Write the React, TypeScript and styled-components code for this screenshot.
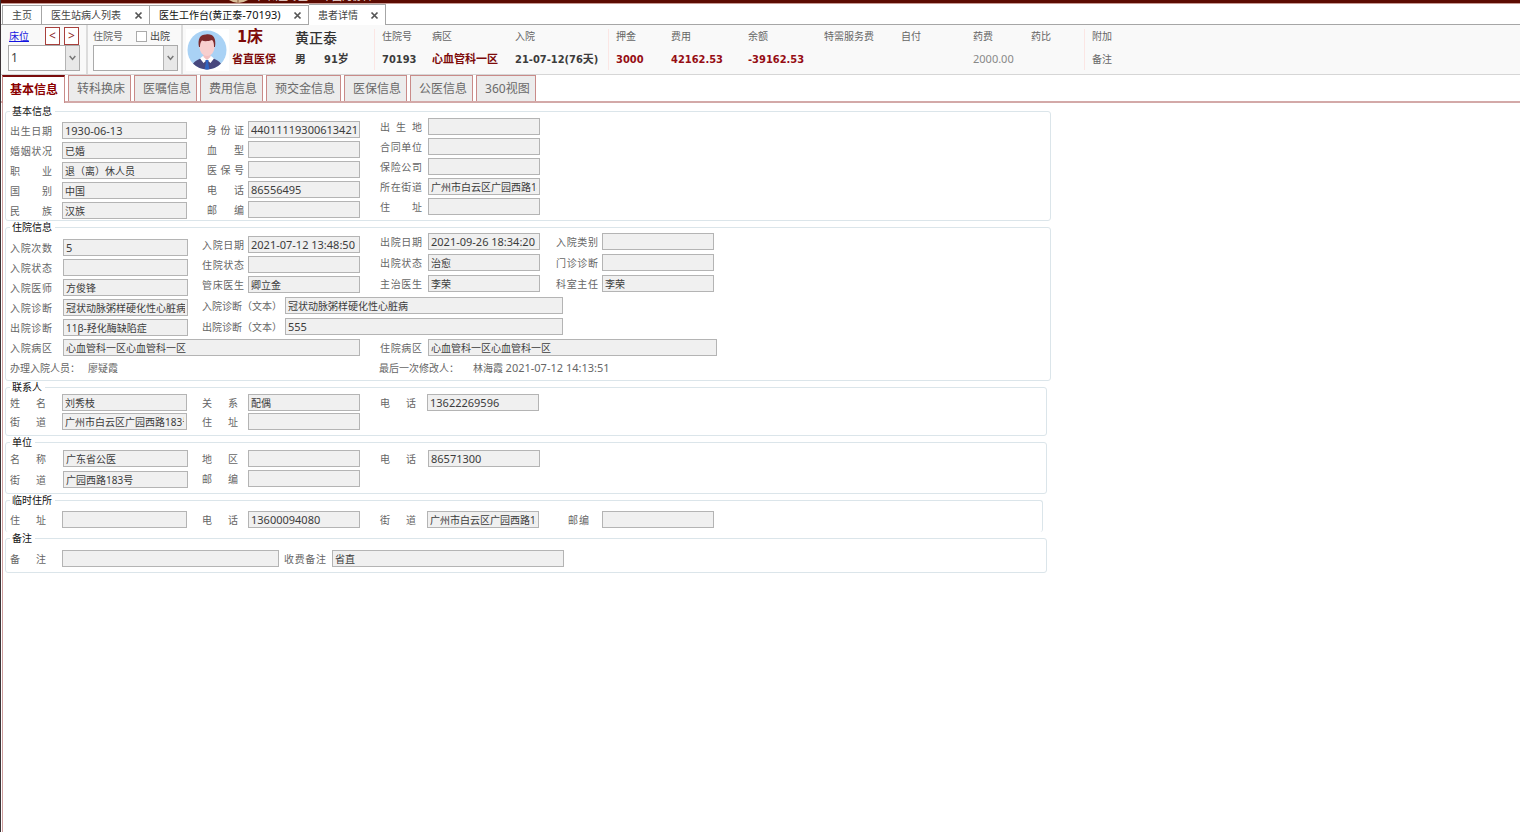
import React, { useId } from 'react';
import styled, { createGlobalStyle } from 'styled-components';

const GlobalStyle = createGlobalStyle`
  *, *::before, *::after { box-sizing: border-box; }
  body { margin: 0; background: #fff; }
  body, button, input, select {
    font-family: 'Noto Sans', 'Noto Sans CJK SC', sans-serif;
    font-size: 10px;
    line-height: 14px;
    color: #666;
  }
`;

const Page = styled.div`
  min-height: 100vh;
  display: flex;
  flex-direction: column;
  border-left: 1px solid #3c3437;
  background: #fff;
`;

const TitleBar = styled.header`
  height: 4px;
  display: flex;
  align-items: flex-end;
  gap: 14px;
  padding-left: 227px;
  overflow: hidden;
  background: #5c0b02;
  border-bottom: 1px solid #c79b95;
  color: #f4e4e0;
  white-space: nowrap;
`;

const Brand = styled.div`
  display: flex;
  align-items: flex-end;
  gap: 9px;
`;

const Latin = styled.span`
  font-size: 11px;
`;

const WindowTabs = styled.nav`
  height: 21px;
  display: flex;
  align-items: flex-end;
  padding-left: 1px;
  border-bottom: 1px solid #a6a6a6;
`;

const WindowTab = styled.div<{ $width: number; $active?: boolean }>`
  width: ${p => p.$width}px;
  height: ${p => (p.$active ? 21 : 19)}px;
  margin-bottom: ${p => (p.$active ? -1 : 0)}px;
  padding: 0 6px 0 9px;
  display: flex;
  align-items: center;
  justify-content: space-between;
  background: #fff;
  border: 1px solid #a6a6a6;
  border-width: 1px 1px 0 ${p => (p.$active ? 0 : 1)}px;
  & + & { border-left-width: 0; }
`;

const TabName = styled.button<{ $tone?: string }>`
  border: 0;
  padding: 0;
  background: none;
  white-space: nowrap;
  color: ${p => p.$tone ?? '#444'};
`;

const CloseButton = styled.button`
  border: 0;
  padding: 0;
  width: 9px;
  height: 9px;
  display: flex;
  background: none;
`;

const PatientBar = styled.section`
  height: 50px;
  display: flex;
  background: #f9f9f9;
  border-bottom: 1px solid #d6d6d6;
  padding-left: 1px;
  white-space: nowrap;
`;

const PickerBlock = styled.div<{ $width: number; $pad: number }>`
  width: ${p => p.$width}px;
  padding: 2px 0 0 ${p => p.$pad}px;
  border-right: 2px solid #dcdcdc;
`;

const PickerTop = styled.div`
  height: 18px;
  display: flex;
  align-items: center;
`;

const BedLink = styled.a`
  width: 37px;
  padding-left: 1px;
  color: #1414e0;
  text-decoration: underline;
`;

const StepButton = styled.button`
  width: 15px;
  height: 18px;
  margin-right: 4px;
  padding: 0;
  border: 1px solid #a8403c;
  background: #fff;
  color: #8b1a1a;
  font-size: 12px;
  display: flex;
  align-items: center;
  justify-content: center;
`;

const AdmissionLabel = styled.label`
  width: 43px;
`;

const CheckLabel = styled.label`
  display: flex;
  align-items: center;
  gap: 3px;
  color: #444;
`;

const CheckBox = styled.input`
  appearance: none;
  width: 11px;
  height: 11px;
  margin: 0;
  border: 1px solid #aaa;
  background: #fff;
`;

const SelectFrame = styled.div<{ $width: number }>`
  position: relative;
  width: ${p => p.$width}px;
  height: 26px;
`;

const Select = styled.select`
  appearance: none;
  width: 100%;
  height: 100%;
  padding: 0 16px 0 2px;
  border: 1px solid #aaa;
  border-radius: 0;
  background: #fff;
  font-size: 12px;
  color: #444;
`;

const SelectArrow = styled.span`
  position: absolute;
  top: 1px;
  right: 1px;
  bottom: 1px;
  width: 14px;
  display: flex;
  align-items: center;
  justify-content: center;
  background: #e8e8e8;
  border-left: 1px solid #b4b4b4;
  pointer-events: none;
`;

const AvatarBox = styled.div`
  width: 43px;
  margin: 4px 0 0 3px;
  height: 42px;
  padding-left: 1px;
  background: #fff;
`;

const Person = styled.div<{ $width: number; $pad: number }>`
  width: ${p => p.$width}px;
  padding: 3px 0 0 ${p => p.$pad}px;
  display: flex;
  flex-direction: column;
  gap: 7px;
`;

const BedNumber = styled.strong`
  padding-left: 5px;
  font: 700 16px/18px 'DejaVu Sans Condensed', 'Noto Sans CJK SC', sans-serif;
  color: #7d0a0a;
`;

const PatientName = styled.strong`
  font: 500 14px/18px 'Noto Sans CJK SC', sans-serif;
  color: #333;
`;

const Strong = styled.strong<{ $color?: string }>`
  height: 14px;
  font: 700 11px/14px 'DejaVu Sans Condensed', 'Noto Sans CJK SC', sans-serif;
  color: ${p => p.$color ?? '#3c3c3c'};
`;

const PersonMeta = styled.div`
  display: flex;
  gap: 18px;
`;

const InfoGroup = styled.dl`
  margin: 4px 0 4px;
  display: flex;
  padding-left: 7px;
  border-left: 1px solid #fbe6e4;
`;

const InfoCell = styled.div<{ $width: number }>`
  width: ${p => p.$width}px;
  display: flex;
  flex-direction: column;
  gap: 9px;
  dt, dd { margin: 0; height: 14px; }
`;

const Plain = styled.span`
  font-size: 11px;
  color: #888;
`;

const SectionTabs = styled.div`
  height: 28px;
  display: flex;
  align-items: flex-end;
  gap: 3px;
  padding-left: 1px;
  border-bottom: 2px solid #d3a9a8;
`;

const SectionTab = styled.button<{ $active?: boolean }>`
  height: ${p => (p.$active ? 28 : 26)}px;
  margin-bottom: ${p => (p.$active ? -2 : 0)}px;
  padding: ${p => (p.$active ? '0 6px 0 7px' : '0 5px 0 8px')};
  border: 1px solid #c98b89;
  border-bottom: 0;
  border-top-width: ${p => (p.$active ? 2 : 1)}px;
  border-top-color: ${p => (p.$active ? '#7a0c0c' : '#c98b89')};
  background: ${p => (p.$active ? '#fff' : '#ececec')};
  color: ${p => (p.$active ? '#8b0000' : '#6a6a6a')};
  font-size: 12px;
  font-weight: ${p => (p.$active ? 700 : 400)};
  white-space: nowrap;
`;

const Content = styled.main`
  flex: 1;
  margin-left: 1px;
  padding: 2px 2px 0 2px;
  border-left: 1px solid #cf9f9f;
`;

const Group = styled.fieldset<{ $max: number; $bottom?: number; $open?: boolean }>`
  max-width: ${p => p.$max}px;
  min-width: 0;
  margin: 0;
  padding: 0 4px ${p => p.$bottom ?? 5}px;
  border: 1px solid #dbe5ea;
  border-bottom-width: ${p => (p.$open ? 0 : 1)}px;
  border-radius: 3px;
`;

const Legend = styled.legend`
  padding: 0 3px 0 2px;
  height: 12px;
  line-height: 12px;
  color: #111;
`;

const Columns = styled.div`
  display: flex;
`;

const Column = styled.div<{ $top?: number; $gap?: number; $after?: number }>`
  display: flex;
  flex-direction: column;
  gap: ${p => p.$gap ?? 3}px;
  padding-top: ${p => p.$top ?? 0}px;
  margin-right: ${p => p.$after ?? 0}px;
`;

const FieldRow = styled.div`
  display: flex;
  height: 17px;
  align-items: center;
`;

const FieldLabel = styled.label<{ $slot: number; $text: number }>`
  width: ${p => p.$text}px;
  margin-right: ${p => p.$slot - p.$text}px;
  height: 14px;
  white-space: nowrap;
  text-align: justify;
  text-align-last: justify;
`;

const Box = styled.input<{ $width: number; $latin: boolean }>`
  width: ${p => p.$width}px;
  height: 17px;
  padding: 0 2px;
  border: 1px solid #b4b4b4;
  border-radius: 0;
  background: #f0f0f0;
  color: #3c3c3c;
  font-size: ${p => (p.$latin ? 11 : 10)}px;
  outline: 0;
`;

const NoteRow = styled.div`
  display: flex;
  margin-top: 5px;
`;

const Note = styled.span<{ $width?: number }>`
  width: ${p => (p.$width ? `${p.$width}px` : 'auto')};
  white-space: nowrap;
`;

type FieldProps = { label: string; value?: string; slot: number; text?: number; width: number };

function Field({ label, value = '', slot, text = 42, width }: FieldProps) {
  const id = useId();
  return (
    <FieldRow>
      <FieldLabel htmlFor={id} $slot={slot} $text={text}>{label}</FieldLabel>
      <Box id={id} readOnly value={value} $width={width} $latin={/^[\x20-\x7e]*$/.test(value)} />
    </FieldRow>
  );
}

type Item = [label: string, value?: string];

type FieldColumnProps = {
  items: Item[]; slot: number; text?: number; width: number; top?: number; gap?: number; after?: number;
};

function FieldColumn({ items, slot, text, width, top, gap, after }: FieldColumnProps) {
  return (
    <Column $top={top} $gap={gap} $after={after}>
      {items.map(([label, value]) => (
        <Field key={label} label={label} value={value} slot={slot} text={text} width={width} />
      ))}
    </Column>
  );
}

function Close({ name }: { name: string }) {
  return (
    <CloseButton aria-label={`关闭${name}`}>
      <svg width="9" height="9" viewBox="0 0 9 9" stroke="#555" strokeWidth="1.7">
        <path d="M1.5 1.5 7.5 7.5M7.5 1.5 1.5 7.5" />
      </svg>
    </CloseButton>
  );
}

function Arrow() {
  return (
    <SelectArrow>
      <svg width="7" height="6" viewBox="0 0 7 6" fill="none" stroke="#777" strokeWidth="1.5">
        <path d="M0.7 1 3.5 4.4 6.3 1" />
      </svg>
    </SelectArrow>
  );
}

function Avatar() {
  return (
    <svg width="40" height="42" viewBox="0 0 40 42">
      <defs>
        <clipPath id="face"><circle cx="20" cy="21" r="19.5" /></clipPath>
      </defs>
      <circle cx="20" cy="21" r="19.5" fill="#a9d2f5" />
      <g clipPath="url(#face)">
        <path d="M4 42C4 34 9 31 15 29L20 31 25 29C31 31 36 34 36 42Z" fill="#47477d" />
        <path d="M13 29.500 16 27H24L27 29.500 23.500 34 20 31 16.500 34Z" fill="#fff" />
        <path d="M16.500 22H23.500V28L20 31 16.500 28Z" fill="#f2bfc0" />
        <path d="M18.300 31H21.700L21 33 22.500 41H17.500L19 33Z" fill="#2f63c0" />
        <path d="M12.500 14C12.500 10 15 8 20 8S27.500 10 27.500 14V18C27.500 23 24 27 20 27S12.500 23 12.500 18Z" fill="#f8cfce" />
        <path d="M12 18C10.500 10 13 5.500 19 5.500 26 4.500 29.500 9 28 18L27 18C27 14 26.500 12 25 11 21 12.500 17 12.500 15 11.500 13.500 13 13 15 13 18Z" fill="#7d2a2c" />
      </g>
    </svg>
  );
}

const MAROON = '#7d0a0a';
const RED = '#960d14';

const sectionTabs = ['基本信息', '转科换床', '医嘱信息', '费用信息', '预交金信息', '医保信息', '公医信息', '360视图'];

const fees: { name: string; width: number; value?: string; plain?: boolean }[] = [
  { name: '押金', width: 55, value: '3000' },
  { name: '费用', width: 77, value: '42162.53' },
  { name: '余额', width: 76, value: '-39162.53' },
  { name: '特需服务费', width: 77 },
  { name: '自付', width: 72 },
  { name: '药费', width: 58, value: '2000.00', plain: true },
  { name: '药比', width: 53 },
];

export default function App() {
  return (
    <Page>
      <GlobalStyle />
      <TitleBar>
        <Brand>
          <svg width="21" height="3" viewBox="0 0 21 3">
            <path d="M1 0Q10 6 20 0Z" fill="#d9bd98" />
            <path d="M10 0V3" stroke="#8a5a3c" />
          </svg>
          <span>广州医专业</span>
        </Brand>
        <span>中国河协科</span>
      </TitleBar>

      <WindowTabs>
        <WindowTab $width={40}><TabName>主页</TabName></WindowTab>
        <WindowTab $width={108}><TabName>医生站病人列表</TabName><Close name="医生站病人列表" /></WindowTab>
        <WindowTab $width={159}>
          <TabName $tone="#111">医生工作台<Latin>(</Latin>黄正泰<Latin>-70193)</Latin></TabName>
          <Close name="医生工作台" />
        </WindowTab>
        <WindowTab $width={77} $active><TabName>患者详情</TabName><Close name="患者详情" /></WindowTab>
      </WindowTabs>

      <PatientBar>
        <PickerBlock $width={86} $pad={6}>
          <PickerTop>
            <BedLink href="#bed">床位</BedLink>
            <StepButton aria-label="上一床">&lt;</StepButton>
            <StepButton aria-label="下一床">&gt;</StepButton>
          </PickerTop>
          <SelectFrame $width={72}>
            <Select aria-label="床位" defaultValue="1"><option>1</option></Select>
            <Arrow />
          </SelectFrame>
        </PickerBlock>
        <PickerBlock $width={95} $pad={5}>
          <PickerTop>
            <AdmissionLabel htmlFor="admission">住院号</AdmissionLabel>
            <CheckLabel><CheckBox type="checkbox" />出院</CheckLabel>
          </PickerTop>
          <SelectFrame $width={85}>
            <Select id="admission" defaultValue=""><option value="" /></Select>
            <Arrow />
          </SelectFrame>
        </PickerBlock>
        <AvatarBox><Avatar /></AvatarBox>
        <Person $width={50} $pad={3}>
          <BedNumber>1床</BedNumber>
          <Strong $color={MAROON}>省直医保</Strong>
        </Person>
        <Person $width={95} $pad={16}>
          <PatientName>黄正泰</PatientName>
          <PersonMeta><Strong>男</Strong><Strong>91岁</Strong></PersonMeta>
        </Person>
        <InfoGroup>
          <InfoCell $width={50}><dt>住院号</dt><dd><Strong>70193</Strong></dd></InfoCell>
          <InfoCell $width={83}><dt>病区</dt><dd><Strong $color={MAROON}>心血管科一区</Strong></dd></InfoCell>
          <InfoCell $width={93}><dt>入院</dt><dd><Strong>21-07-12(76天)</Strong></dd></InfoCell>
        </InfoGroup>
        <InfoGroup>
          {fees.map(fee => (
            <InfoCell key={fee.name} $width={fee.width}>
              <dt>{fee.name}</dt>
              <dd>{fee.plain ? <Plain>{fee.value}</Plain> : fee.value && <Strong $color={RED}>{fee.value}</Strong>}</dd>
            </InfoCell>
          ))}
        </InfoGroup>
        <InfoGroup>
          <InfoCell $width={40}><dt>附加</dt><dt>备注</dt></InfoCell>
        </InfoGroup>
      </PatientBar>

      <SectionTabs role="tablist">
        {sectionTabs.map((name, i) => (
          <SectionTab key={name} role="tab" aria-selected={i === 0} $active={i === 0}>{name}</SectionTab>
        ))}
      </SectionTabs>

      <Content>
        <Group $max={1046} $bottom={1}>
          <Legend>基本信息</Legend>
          <Columns>
            <FieldColumn slot={52} width={125} top={5} after={20}
              items={[['出生日期', '1930-06-13'], ['婚姻状况', '已婚'], ['职 业', '退（离）休人员'], ['国 别', '中国'], ['民 族', '汉族']]} />
            <FieldColumn slot={41} text={37} width={112} top={4} after={20}
              items={[['身 份 证', '440111193006134211'], ['血 型'], ['医 保 号'], ['电 话', '86556495'], ['邮 编']]} />
            <FieldColumn slot={48} width={112} top={1}
              items={[['出 生 地'], ['合同单位'], ['保险公司'], ['所在街道', '广州市白云区广园西路183号'], ['住 址']]} />
          </Columns>
        </Group>

        <Group $max={1046}>
          <Legend>住院信息</Legend>
          <Columns>
            <FieldColumn slot={53} width={125} top={6} after={14}
              items={[['入院次数', '5'], ['入院状态'], ['入院医师', '方俊锋'], ['入院诊断', '冠状动脉粥样硬化性心脏病'], ['出院诊断', '11β-羟化酶缺陷症']]} />
            <Column $gap={4}>
              <Columns>
                <FieldColumn slot={46} width={112} top={3} after={20}
                  items={[['入院日期', '2021-07-12 13:48:50'], ['住院状态'], ['管床医生', '卿立金']]} />
                <FieldColumn slot={48} width={112} gap={4} after={16}
                  items={[['出院日期', '2021-09-26 18:34:20'], ['出院状态', '治愈'], ['主治医生', '李荣']]} />
                <FieldColumn slot={46} width={112} gap={4}
                  items={[['入院类别'], ['门诊诊断'], ['科室主任', '李荣']]} />
              </Columns>
              <Field label="入院诊断（文本）" value="冠状动脉粥样硬化性心脏病" slot={83} text={80} width={278} />
              <Field label="出院诊断（文本）" value="555" slot={83} text={80} width={278} />
            </Column>
          </Columns>
          <Columns>
            <FieldColumn slot={53} width={297} top={3} after={20} items={[['入院病区', '心血管科一区心血管科一区']]} />
            <FieldColumn slot={48} width={289} top={3} items={[['住院病区', '心血管科一区心血管科一区']]} />
          </Columns>
          <NoteRow>
            <Note $width={78}>办理入院人员：</Note>
            <Note $width={291}>廖疑霞</Note>
            <Note $width={94}>最后一次修改人：</Note>
            <Note>林海霞 <Latin>2021-07-12 14:13:51</Latin></Note>
          </NoteRow>
        </Group>

        <Group $max={1042}>
          <Legend>联系人</Legend>
          <Columns>
            <FieldColumn slot={52} text={36} width={125} top={1} gap={2} after={15}
              items={[['姓 名', '刘秀枝'], ['街 道', '广州市白云区广园西路183号']]} />
            <FieldColumn slot={46} text={36} width={112} top={1} gap={2} after={20}
              items={[['关 系', '配偶'], ['住 址']]} />
            <FieldColumn slot={47} text={36} width={112} top={1} items={[['电 话', '13622269596']]} />
          </Columns>
        </Group>

        <Group $max={1042}>
          <Legend>单位</Legend>
          <Columns>
            <FieldColumn slot={53} text={36} width={125} top={2} gap={4} after={14}
              items={[['名 称', '广东省公医'], ['街 道', '广园西路183号']]} />
            <FieldColumn slot={46} text={36} width={112} top={2} gap={3} after={20}
              items={[['地 区'], ['邮 编']]} />
            <FieldColumn slot={48} text={36} width={112} top={2} items={[['电 话', '86571300']]} />
          </Columns>
        </Group>

        <Group $max={1038} $bottom={4} $open>
          <Legend>临时住所</Legend>
          <Columns>
            <FieldColumn slot={52} text={36} width={125} top={5} after={15} items={[['住 址']]} />
            <FieldColumn slot={46} text={36} width={112} top={5} after={20} items={[['电 话', '13600094080']]} />
            <FieldColumn slot={47} text={36} width={112} top={5} after={29} items={[['街 道', '广州市白云区广园西路183号']]} />
            <FieldColumn slot={34} text={21} width={112} top={5} items={[['邮编']]} />
          </Columns>
        </Group>

        <Group $max={1042}>
          <Legend>备注</Legend>
          <Columns>
            <FieldColumn slot={52} text={36} width={217} top={6} after={5} items={[['备 注']]} />
            <FieldColumn slot={48} width={232} top={6} items={[['收费备注', '省直']]} />
          </Columns>
        </Group>
      </Content>
    </Page>
  );
}
